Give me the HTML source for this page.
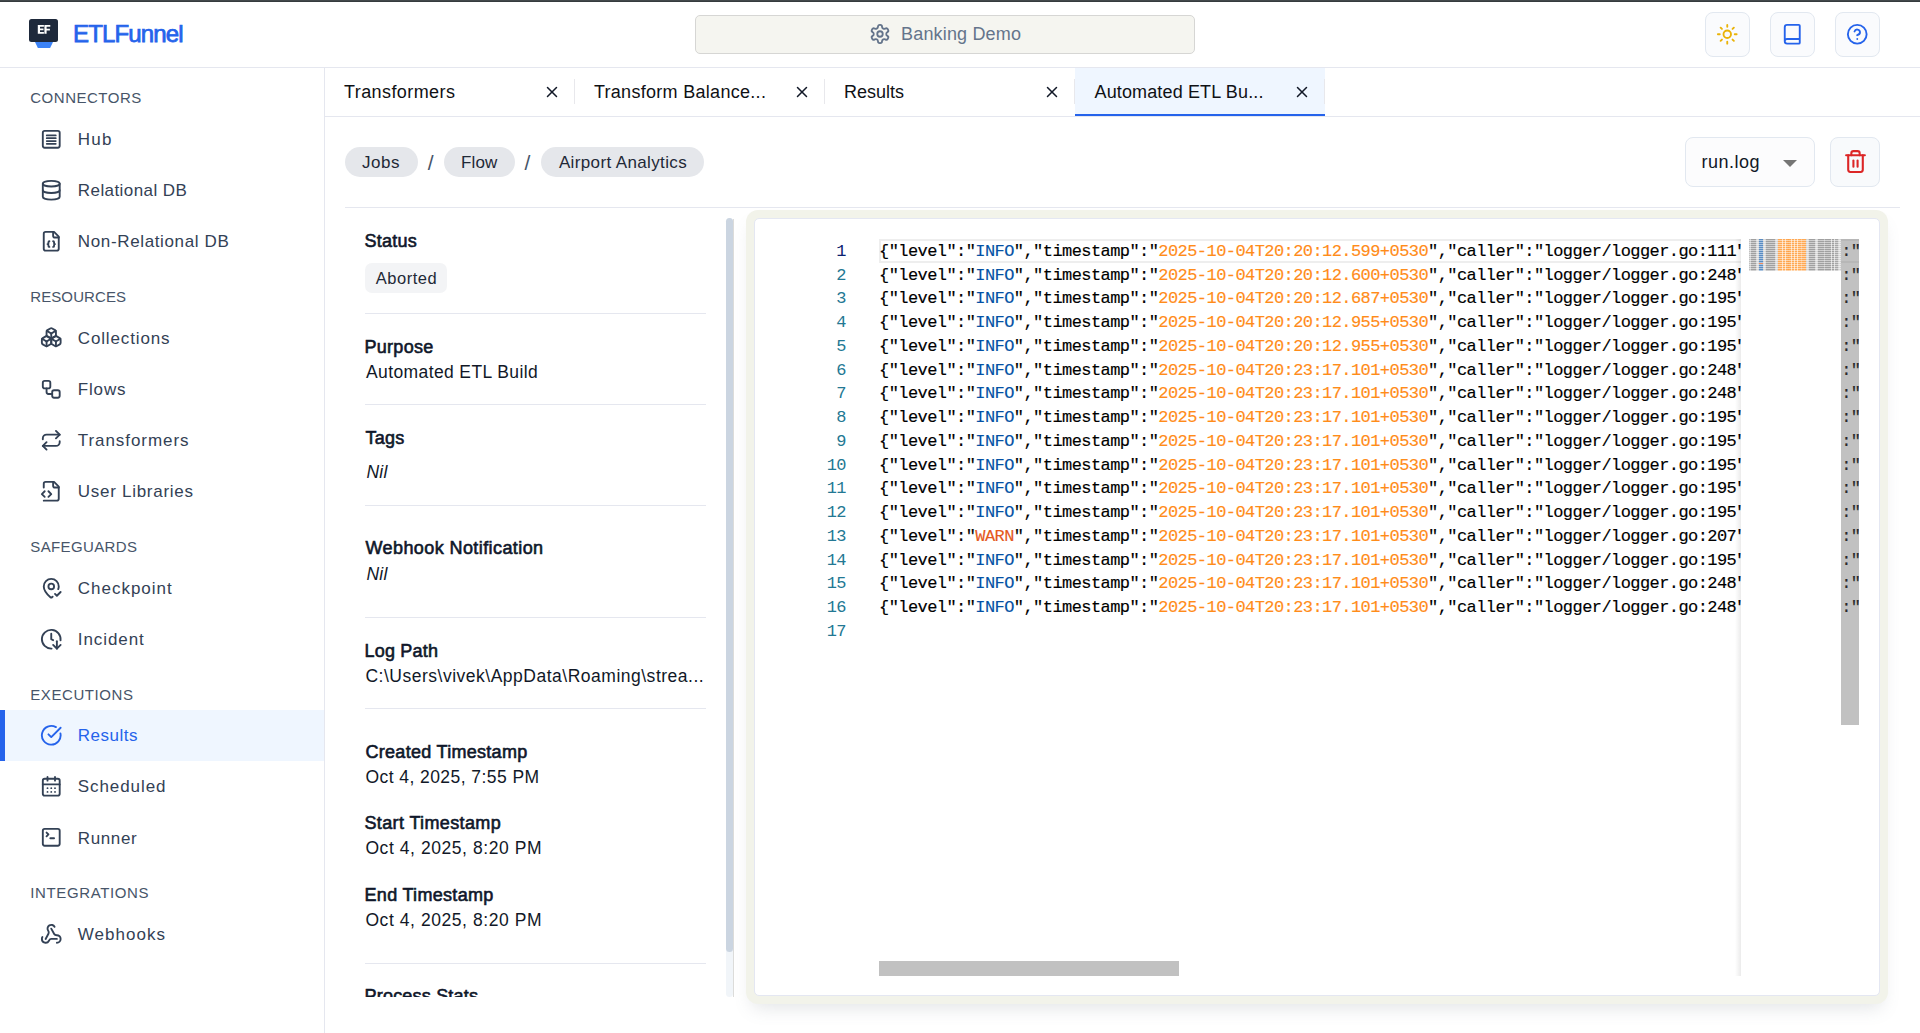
<!DOCTYPE html><html><head><meta charset="utf-8"><title>ETLFunnel</title><style>*{box-sizing:border-box;margin:0;padding:0}
html,body{width:1920px;height:1033px;overflow:hidden;background:#fff}
body{font-family:"Liberation Sans",sans-serif;color:#0f172a;position:relative}
.abs{position:absolute}
.t{white-space:pre;line-height:24px;height:24px}
.topline{left:0;top:0;width:1920px;height:2px;background:linear-gradient(#42484b 0 50%,#353b3e 50% 100%)}
.hdrline{left:0;top:67px;width:1920px;height:1px;background:#e5e7ef}
.sideline{left:324px;top:68px;width:1px;height:965px;background:#e5e7ef}
.logo-box{left:29px;top:19px;width:29px;height:23px;background:#1e293b;border-radius:2.5px}
.logo-tri{left:35px;top:42px;width:18px;height:6px;background:#3b82f6;clip-path:polygon(0 0,100% 0,84% 100%,16% 100%)}
.proj{left:695px;top:15px;width:500px;height:39px;background:#f5f5f0;border:1px solid #d6d6d4;border-radius:5px}
.hbtn{top:12px;width:45px;height:45px;background:#fafbfd;border:1px solid #e2e8f0;border-radius:8px;line-height:0}
.hbtn svg{position:absolute;left:10.25px;top:10.25px}
.actbg{left:0;width:324px;height:51px;background:#eff6ff;border-left:5px solid #2563eb}
.tabline{left:325px;top:116px;width:1595px;height:1px;background:#e5e7ef}
.tabact{left:1075px;top:68px;width:250px;height:48px;background:#eff6ff;border-bottom:2px solid #2563eb}
.tabsep{top:79px;width:1px;height:25px;background:#e8e8ec}
.pill{top:147px;height:30px;border-radius:15px;background:#e5e7eb}
.crumbline{left:345px;top:207px;width:1555px;height:1px;background:#e5e7ef}
.sel{left:1685px;top:137px;width:130px;height:50px;background:#fcfcfd;border:1px solid #e2e8f0;border-radius:8px}
.sel i{position:absolute;left:97px;top:21.5px;width:0;height:0;border-left:7px solid transparent;border-right:7px solid transparent;border-top:7px solid #757575}
.del{left:1830px;top:137px;width:50px;height:50px;background:#f8fafc;border:1px solid #e2e8f0;border-radius:8px;line-height:0}
.del svg{position:absolute;left:11.9px;top:11px}
.div{left:365px;width:341px;height:1px;background:#e5e7ef}
.badge{left:365px;top:263px;width:82px;height:30px;border-radius:7px;background:#f3f4f6}
.ltrack{left:726px;top:218px;width:7px;height:779px;background:#f1f5f9;border-radius:4px}
.lthumb{left:726px;top:218px;width:7px;height:734px;background:#cbd5e1;border-radius:4px}
.ltrackline{left:733px;top:219px;width:1px;height:778px;background:#dcdcda}
.lclip{left:345px;top:208px;width:390px;height:789px;overflow:hidden}
.edouter{left:746px;top:210px;width:1142px;height:794px;background:#f2f3ea;border-radius:12px;box-shadow:0 10px 18px -6px rgba(100,110,120,.18)}
.edinner{left:754px;top:218px;width:1126px;height:778px;background:#fff;border:1px solid #e4e7f2;border-radius:5px;overflow:hidden}
.mono{font-family:"Liberation Mono",monospace;font-size:16px;white-space:pre;-webkit-text-stroke:0.15px}
.ln{-webkit-text-stroke:0;color:#237893;text-align:right;width:60px;left:786px;height:24px;line-height:24px}
.ln.cur{color:#0b216f}
.cl{left:879px;height:24px;line-height:24px;color:#000;width:862px;overflow:hidden}
.cr{left:1841.2px;height:24px;line-height:24px;color:#000;width:18px;overflow:hidden}
.b{color:#0451a5}.o{color:#ff8c19}.r{color:#e5591c}
.curline{left:879px;top:239px;width:980px;height:24px;border:2px solid #eeeeee;border-right:none}
.hscroll{left:879px;top:961px;width:300px;height:15px;background:rgba(100,100,100,.4)}
.vscroll{left:1841px;top:239px;width:18px;height:486px;background:rgba(100,100,100,.4)}
.mmbg{left:1741px;top:239px;width:100px;height:737px;background:#fff}
.mmshadow{left:1735px;top:239px;width:6px;height:737px;background:linear-gradient(to right,rgba(0,0,0,0),rgba(0,0,0,.08))}
.mono{font-size:17px;letter-spacing:-0.570px}</style></head><body>
<div class="abs topline"></div><div class="abs hdrline"></div><div class="abs sideline"></div>
<div class="abs logo-box"></div><div class="abs logo-tri"></div>
<svg class="abs" style="left:37px;top:24px" width="14" height="11" viewBox="0 0 14 11"><path fill="#fff" d="M0.8 1h6.1v1.8H3v1.7h3.5v1.7H3v1.7h3.9v1.8H0.8zM7.4 1h5.9v1.8H9.6v1.9h3.3v1.7H9.6v3.3H7.4z"/></svg>
<div class="abs t" id="t0" style="left:73.00px;top:22.00px;font-size:24px;color:#2563eb;letter-spacing:-0.846px;-webkit-text-stroke:0.75px #2563eb;">ETLFunnel</div>
<div class="abs proj"></div>
<div class="abs" style="left:869px;top:23.1px;color:#64748b;line-height:0"><svg width="22" height="22" viewBox="0 0 24 24" fill="none" stroke="currentColor" stroke-width="2" stroke-linecap="round" stroke-linejoin="round" ><path d="M12.22 2h-.44a2 2 0 0 0-2 2v.18a2 2 0 0 1-1 1.73l-.43.25a2 2 0 0 1-2 0l-.15-.08a2 2 0 0 0-2.73.73l-.22.38a2 2 0 0 0 .73 2.73l.15.1a2 2 0 0 1 1 1.72v.51a2 2 0 0 1-1 1.74l-.15.09a2 2 0 0 0-.73 2.73l.22.38a2 2 0 0 0 2.73.73l.15-.08a2 2 0 0 1 2 0l.43.25a2 2 0 0 1 1 1.73V20a2 2 0 0 0 2 2h.44a2 2 0 0 0 2-2v-.18a2 2 0 0 1 1-1.73l.43-.25a2 2 0 0 1 2 0l.15.08a2 2 0 0 0 2.73-.73l.22-.39a2 2 0 0 0-.73-2.73l-.15-.08a2 2 0 0 1-1-1.74v-.5a2 2 0 0 1 1-1.74l.15-.09a2 2 0 0 0 .73-2.73l-.22-.38a2 2 0 0 0-2.73-.73l-.15.08a2 2 0 0 1-2 0l-.43-.25a2 2 0 0 1-1-1.73V4a2 2 0 0 0-2-2z"/><circle cx="12" cy="12" r="3"/></svg></div>
<div class="abs t" id="t1" style="left:901.10px;top:22.00px;font-size:18px;color:#64748b;letter-spacing:0.159px;">Banking Demo</div>
<div class="abs hbtn" style="left:1705px"><svg width="22.5" height="22.5" viewBox="0 0 24 24" fill="none" stroke="#eab308" stroke-width="2" stroke-linecap="round" stroke-linejoin="round" ><circle cx="12" cy="12" r="4"/><path d="M12 2v2"/><path d="M12 20v2"/><path d="m4.93 4.93 1.41 1.41"/><path d="m17.66 17.66 1.41 1.41"/><path d="M2 12h2"/><path d="M20 12h2"/><path d="m6.34 17.66-1.41 1.41"/><path d="m19.07 4.93-1.41 1.41"/></svg></div>
<div class="abs hbtn" style="left:1770px"><svg width="22.5" height="22.5" viewBox="0 0 24 24" fill="none" stroke="#2563eb" stroke-width="2" stroke-linecap="round" stroke-linejoin="round" ><path d="M4 19.5v-15A2.5 2.5 0 0 1 6.5 2H19a1 1 0 0 1 1 1v18a1 1 0 0 1-1 1H6.5a1 1 0 0 1 0-5H20"/></svg></div>
<div class="abs hbtn" style="left:1835px"><svg width="22.5" height="22.5" viewBox="0 0 24 24" fill="none" stroke="#2563eb" stroke-width="2" stroke-linecap="round" stroke-linejoin="round" ><circle cx="12" cy="12" r="10"/><path d="M9.09 9a3 3 0 0 1 5.83 1c0 2-3 3-3 3"/><path d="M12 17h.01"/></svg></div>
<div class="abs t" id="t2" style="left:30.25px;top:86.00px;font-size:15px;color:#475569;letter-spacing:0.517px;">CONNECTORS</div>
<div class="abs" style="left:40.1px;top:127.75px;color:#334155;line-height:0"><svg width="22.5" height="22.5" viewBox="0 0 24 24" fill="none" stroke="currentColor" stroke-width="2" stroke-linecap="round" stroke-linejoin="round" ><rect x="3" y="3" width="18" height="18" rx="2"/><path d="M7.2 7.9h9.6M7.2 10.9h9.6M7.2 13.9h9.6M7.2 16.9h9.6" stroke-width="1.9"/></svg></div>
<div class="abs t" id="t3" style="left:77.80px;top:128.00px;font-size:17px;color:#334155;letter-spacing:1.234px;">Hub</div>
<div class="abs" style="left:40.1px;top:178.55px;color:#334155;line-height:0"><svg width="22.5" height="22.5" viewBox="0 0 24 24" fill="none" stroke="currentColor" stroke-width="2" stroke-linecap="round" stroke-linejoin="round" ><ellipse cx="12" cy="5" rx="9" ry="3"/><path d="M3 5V19A9 3 0 0 0 21 19V5"/><path d="M3 12A9 3 0 0 0 21 12"/></svg></div>
<div class="abs t" id="t4" style="left:77.80px;top:179.00px;font-size:17px;color:#334155;letter-spacing:0.425px;">Relational DB</div>
<div class="abs" style="left:40.1px;top:229.55px;color:#334155;line-height:0"><svg width="22.5" height="22.5" viewBox="0 0 24 24" fill="none" stroke="currentColor" stroke-width="2" stroke-linecap="round" stroke-linejoin="round" ><path d="M15 2H6a2 2 0 0 0-2 2v16a2 2 0 0 0 2 2h12a2 2 0 0 0 2-2V7Z"/><path d="M14 2v4a2 2 0 0 0 2 2h4"/><path d="M10 12a1 1 0 0 0-1 1v1a1 1 0 0 1-1 1 1 1 0 0 1 1 1v1a1 1 0 0 0 1 1"/><path d="M14 18a1 1 0 0 0 1-1v-1a1 1 0 0 1 1-1 1 1 0 0 1-1-1v-1a1 1 0 0 0-1-1"/></svg></div>
<div class="abs t" id="t5" style="left:77.80px;top:230.00px;font-size:17px;color:#334155;letter-spacing:0.641px;">Non-Relational DB</div>
<div class="abs t" id="t6" style="left:30.25px;top:285.00px;font-size:15px;color:#475569;letter-spacing:0.092px;">RESOURCES</div>
<div class="abs" style="left:40.1px;top:325.85px;color:#334155;line-height:0"><svg width="22.5" height="22.5" viewBox="0 0 24 24" fill="none" stroke="currentColor" stroke-width="2" stroke-linecap="round" stroke-linejoin="round" ><path d="M2.97 12.92A2 2 0 0 0 2 14.63v3.24a2 2 0 0 0 .97 1.71l3 1.8a2 2 0 0 0 2.06 0L12 19v-5.5l-5-3-4.03 2.42Z"/><path d="m7 16.5-4.74-2.85"/><path d="m7 16.5 5-3"/><path d="M7 16.5v5.17"/><path d="M12 13.5V19l3.97 2.38a2 2 0 0 0 2.06 0l3-1.8a2 2 0 0 0 .97-1.71v-3.24a2 2 0 0 0-.97-1.71L17 10.5l-5 3Z"/><path d="m17 16.5-5-3"/><path d="m17 16.5 4.74-2.85"/><path d="M17 16.5v5.17"/><path d="M7.97 4.42A2 2 0 0 0 7 6.13v4.37l5 3 5-3V6.13a2 2 0 0 0-.97-1.71l-3-1.8a2 2 0 0 0-2.06 0l-3 1.8Z"/><path d="M12 8 7.26 5.15"/><path d="m12 8 4.74-2.85"/><path d="M12 13.5V8"/></svg></div>
<div class="abs t" id="t7" style="left:77.80px;top:327.00px;font-size:17px;color:#334155;letter-spacing:0.855px;">Collections</div>
<div class="abs" style="left:40.1px;top:377.65px;color:#334155;line-height:0"><svg width="22.5" height="22.5" viewBox="0 0 24 24" fill="none" stroke="currentColor" stroke-width="2" stroke-linecap="round" stroke-linejoin="round" ><rect width="8" height="8" x="3" y="3" rx="2"/><path d="M7 11v4a2 2 0 0 0 2 2h4"/><rect width="8" height="8" x="13" y="13" rx="2"/></svg></div>
<div class="abs t" id="t8" style="left:77.80px;top:378.00px;font-size:17px;color:#334155;letter-spacing:0.827px;">Flows</div>
<div class="abs" style="left:40.1px;top:428.75px;color:#334155;line-height:0"><svg width="22.5" height="22.5" viewBox="0 0 24 24" fill="none" stroke="currentColor" stroke-width="2" stroke-linecap="round" stroke-linejoin="round" ><path d="m17 2 4 4-4 4"/><path d="M3 11v-1a4 4 0 0 1 4-4h14"/><path d="m7 22-4-4 4-4"/><path d="M21 13v1a4 4 0 0 1-4 4H3"/></svg></div>
<div class="abs t" id="t9" style="left:77.80px;top:429.00px;font-size:17px;color:#334155;letter-spacing:0.933px;">Transformers</div>
<div class="abs" style="left:40.1px;top:479.75px;color:#334155;line-height:0"><svg width="22.5" height="22.5" viewBox="0 0 24 24" fill="none" stroke="currentColor" stroke-width="2" stroke-linecap="round" stroke-linejoin="round" ><path d="M4 22h14a2 2 0 0 0 2-2V7l-5-5H6a2 2 0 0 0-2 2v4"/><path d="M14 2v4a2 2 0 0 0 2 2h4"/><path d="m5 12-3 3 3 3"/><path d="m9 18 3-3-3-3"/></svg></div>
<div class="abs t" id="t10" style="left:77.80px;top:480.00px;font-size:17px;color:#334155;letter-spacing:0.722px;">User Libraries</div>
<div class="abs t" id="t11" style="left:30.25px;top:535.00px;font-size:15px;color:#475569;letter-spacing:0.378px;">SAFEGUARDS</div>
<div class="abs" style="left:40.1px;top:576.55px;color:#334155;line-height:0"><svg width="22.5" height="22.5" viewBox="0 0 24 24" fill="none" stroke="currentColor" stroke-width="2" stroke-linecap="round" stroke-linejoin="round" ><path d="M19.43 12.935c.357-.967.57-1.955.57-2.935a8 8 0 0 0-16 0c0 4.993 5.539 10.193 7.399 11.799a1 1 0 0 0 1.202 0 32.197 32.197 0 0 0 .813-.728"/><circle cx="12" cy="10" r="3"/><path d="m16 18 2 2 4-4"/></svg></div>
<div class="abs t" id="t12" style="left:77.80px;top:577.00px;font-size:17px;color:#334155;letter-spacing:0.986px;">Checkpoint</div>
<div class="abs" style="left:40.1px;top:627.75px;color:#334155;line-height:0"><svg width="22.5" height="22.5" viewBox="0 0 24 24" fill="none" stroke="currentColor" stroke-width="2" stroke-linecap="round" stroke-linejoin="round" ><path d="M12.338 21.994A10 10 0 1 1 21.925 13.227"/><path d="M12 6v6l2 1"/><path d="m14 18 4 4 4-4"/><path d="M18 14v8"/></svg></div>
<div class="abs t" id="t13" style="left:77.80px;top:628.00px;font-size:17px;color:#334155;letter-spacing:0.912px;">Incident</div>
<div class="abs t" id="t14" style="left:30.25px;top:683.00px;font-size:15px;color:#475569;letter-spacing:0.582px;">EXECUTIONS</div>
<div class="abs actbg" style="top:710px"></div>
<div class="abs" style="left:40.1px;top:723.95px;color:#2563eb;line-height:0"><svg width="22.5" height="22.5" viewBox="0 0 24 24" fill="none" stroke="currentColor" stroke-width="2" stroke-linecap="round" stroke-linejoin="round" ><path d="M21.801 10A10 10 0 1 1 17 3.335"/><path d="m9 11 3 3L22 4"/></svg></div>
<div class="abs t" id="t15" style="left:77.80px;top:724.00px;font-size:17px;color:#2563eb;letter-spacing:0.502px;">Results</div>
<div class="abs" style="left:40.1px;top:775.15px;color:#334155;line-height:0"><svg width="22.5" height="22.5" viewBox="0 0 24 24" fill="none" stroke="currentColor" stroke-width="2" stroke-linecap="round" stroke-linejoin="round" ><path d="M8 2v4"/><path d="M16 2v4"/><rect width="18" height="18" x="3" y="4" rx="2"/><path d="M3 10h18"/><path d="M8 14h.01"/><path d="M12 14h.01"/><path d="M16 14h.01"/><path d="M8 18h.01"/><path d="M12 18h.01"/><path d="M16 18h.01"/></svg></div>
<div class="abs t" id="t16" style="left:77.80px;top:775.00px;font-size:17px;color:#334155;letter-spacing:0.914px;">Scheduled</div>
<div class="abs" style="left:40.1px;top:826.15px;color:#334155;line-height:0"><svg width="22.5" height="22.5" viewBox="0 0 24 24" fill="none" stroke="currentColor" stroke-width="2" stroke-linecap="round" stroke-linejoin="round" ><path d="m7 11 2-2-2-2"/><path d="M11 13h4"/><rect width="18" height="18" x="3" y="3" rx="2" ry="2"/></svg></div>
<div class="abs t" id="t17" style="left:77.80px;top:827.00px;font-size:17px;color:#334155;letter-spacing:0.621px;">Runner</div>
<div class="abs t" id="t18" style="left:30.25px;top:881.00px;font-size:15px;color:#475569;letter-spacing:0.624px;">INTEGRATIONS</div>
<div class="abs" style="left:40.1px;top:922.75px;color:#334155;line-height:0"><svg width="22.5" height="22.5" viewBox="0 0 24 24" fill="none" stroke="currentColor" stroke-width="2" stroke-linecap="round" stroke-linejoin="round" ><path d="M18 16.98h-5.99c-1.1 0-1.95.94-2.48 1.9A4 4 0 0 1 2 17c.01-.7.2-1.4.57-2"/><path d="m6 17 3.13-5.78c.53-.97.1-2.18-.5-3.1a4 4 0 1 1 6.89-4.06"/><path d="m12 6 3.13 5.73C15.66 12.7 16.9 13 18 13a4 4 0 0 1 0 8"/></svg></div>
<div class="abs t" id="t19" style="left:77.80px;top:923.00px;font-size:17px;color:#334155;letter-spacing:1.027px;">Webhooks</div>
<div class="abs tabline"></div>
<div class="abs tabact"></div>
<div class="abs t" id="t20" style="left:344.00px;top:80.00px;font-size:18px;color:#0f1115;letter-spacing:0.414px;">Transformers</div>
<div class="abs" style="left:542.7px;top:83px;color:#111827;line-height:0"><svg width="18" height="18" viewBox="0 0 24 24" fill="none" stroke="currentColor" stroke-width="2" stroke-linecap="round" stroke-linejoin="round" ><path d="M18 6 6 18"/><path d="m6 6 12 12"/></svg></div>
<div class="abs t" id="t21" style="left:593.90px;top:80.00px;font-size:18px;color:#0f1115;letter-spacing:0.295px;">Transform Balance...</div>
<div class="abs" style="left:792.7px;top:83px;color:#111827;line-height:0"><svg width="18" height="18" viewBox="0 0 24 24" fill="none" stroke="currentColor" stroke-width="2" stroke-linecap="round" stroke-linejoin="round" ><path d="M18 6 6 18"/><path d="m6 6 12 12"/></svg></div>
<div class="abs t" id="t22" style="left:843.90px;top:80.00px;font-size:18px;color:#0f1115;letter-spacing:-0.003px;">Results</div>
<div class="abs" style="left:1042.7px;top:83px;color:#111827;line-height:0"><svg width="18" height="18" viewBox="0 0 24 24" fill="none" stroke="currentColor" stroke-width="2" stroke-linecap="round" stroke-linejoin="round" ><path d="M18 6 6 18"/><path d="m6 6 12 12"/></svg></div>
<div class="abs t" id="t23" style="left:1094.50px;top:80.00px;font-size:18px;color:#0f1115;letter-spacing:0.140px;">Automated ETL Bu...</div>
<div class="abs" style="left:1292.8px;top:83px;color:#111827;line-height:0"><svg width="18" height="18" viewBox="0 0 24 24" fill="none" stroke="currentColor" stroke-width="2" stroke-linecap="round" stroke-linejoin="round" ><path d="M18 6 6 18"/><path d="m6 6 12 12"/></svg></div>
<div class="abs tabsep" style="left:574px"></div>
<div class="abs tabsep" style="left:824px"></div>
<div class="abs tabsep" style="left:1074px"></div>
<div class="abs tabsep" style="left:1324px"></div>
<div class="abs pill" style="left:345px;width:73px"></div>
<div class="abs pill" style="left:444px;width:71px"></div>
<div class="abs pill" style="left:541px;width:163px"></div>
<div class="abs t" id="t24" style="left:362.10px;top:151.00px;font-size:17px;color:#1f2937;letter-spacing:0.530px;">Jobs</div>
<div class="abs t" id="t25" style="left:427.80px;top:151.00px;font-size:21px;color:#475569;letter-spacing:0.000px;">/</div>
<div class="abs t" id="t26" style="left:461.10px;top:151.00px;font-size:17px;color:#1f2937;letter-spacing:0.095px;">Flow</div>
<div class="abs t" id="t27" style="left:524.60px;top:151.00px;font-size:21px;color:#475569;letter-spacing:0.000px;">/</div>
<div class="abs t" id="t28" style="left:558.90px;top:151.00px;font-size:17px;color:#1f2937;letter-spacing:0.368px;">Airport Analytics</div>
<div class="abs crumbline"></div>
<div class="abs sel"><i></i></div>
<div class="abs t" id="t29" style="left:1701.40px;top:150.00px;font-size:18px;color:#111827;letter-spacing:0.512px;">run.log</div>
<div class="abs del"><svg width="25" height="25" viewBox="0 0 24 24" fill="none" stroke="#dc2626" stroke-width="2" stroke-linecap="round" stroke-linejoin="round" ><path d="M3 6h18"/><path d="M19 6v14c0 1-1 2-2 2H7c-1 0-2-1-2-2V6"/><path d="M8 6V4c0-1 1-2 2-2h4c1 0 2 1 2 2v2"/><line x1="10" x2="10" y1="11" y2="17"/><line x1="14" x2="14" y1="11" y2="17"/></svg></div>
<div class="abs lclip"><div class="abs" style="left:-345px;top:-208px;width:1920px;height:1033px">
<div class="abs t" id="t30" style="left:364.50px;top:229.00px;font-size:18px;color:#0f172a;letter-spacing:0.234px;-webkit-text-stroke:0.6px #0f172a;">Status</div>
<div class="abs badge"></div>
<div class="abs t" id="t31" style="left:375.70px;top:266.00px;font-size:16.5px;color:#1f2937;letter-spacing:0.531px;">Aborted</div>
<div class="abs div" style="top:313px"></div>
<div class="abs t" id="t32" style="left:364.50px;top:335.00px;font-size:18px;color:#0f172a;letter-spacing:0.278px;-webkit-text-stroke:0.6px #0f172a;">Purpose</div>
<div class="abs t" id="t33" style="left:366.00px;top:360.00px;font-size:17.5px;color:#111827;letter-spacing:0.387px;">Automated ETL Build</div>
<div class="abs div" style="top:404px"></div>
<div class="abs t" id="t34" style="left:365.50px;top:426.00px;font-size:18px;color:#0f172a;letter-spacing:0.260px;-webkit-text-stroke:0.6px #0f172a;">Tags</div>
<div class="abs t" id="t35" style="left:366.40px;top:460.00px;font-size:17.5px;color:#111827;letter-spacing:0.337px;font-style:italic;">Nil</div>
<div class="abs div" style="top:505px"></div>
<div class="abs t" id="t36" style="left:365.50px;top:536.00px;font-size:18px;color:#0f172a;letter-spacing:0.413px;-webkit-text-stroke:0.6px #0f172a;">Webhook Notification</div>
<div class="abs t" id="t37" style="left:366.40px;top:562.00px;font-size:17.5px;color:#111827;letter-spacing:0.337px;font-style:italic;">Nil</div>
<div class="abs div" style="top:617px"></div>
<div class="abs t" id="t38" style="left:364.50px;top:639.00px;font-size:18px;color:#0f172a;letter-spacing:0.193px;-webkit-text-stroke:0.6px #0f172a;">Log Path</div>
<div class="abs t" id="t39" style="left:365.40px;top:664.00px;font-size:17.5px;color:#111827;letter-spacing:0.507px;">C:\Users\vivek\AppData\Roaming\strea...</div>
<div class="abs div" style="top:708px"></div>
<div class="abs t" id="t40" style="left:365.50px;top:740.00px;font-size:18px;color:#0f172a;letter-spacing:0.289px;-webkit-text-stroke:0.6px #0f172a;">Created Timestamp</div>
<div class="abs t" id="t41" style="left:365.40px;top:765.00px;font-size:17.5px;color:#111827;letter-spacing:0.437px;">Oct 4, 2025, 7:55 PM</div>
<div class="abs t" id="t42" style="left:364.50px;top:811.00px;font-size:18px;color:#0f172a;letter-spacing:0.368px;-webkit-text-stroke:0.6px #0f172a;">Start Timestamp</div>
<div class="abs t" id="t43" style="left:365.40px;top:836.00px;font-size:17.5px;color:#111827;letter-spacing:0.569px;">Oct 4, 2025, 8:20 PM</div>
<div class="abs t" id="t44" style="left:364.50px;top:883.00px;font-size:18px;color:#0f172a;letter-spacing:0.311px;-webkit-text-stroke:0.6px #0f172a;">End Timestamp</div>
<div class="abs t" id="t45" style="left:365.40px;top:908.00px;font-size:17.5px;color:#111827;letter-spacing:0.569px;">Oct 4, 2025, 8:20 PM</div>
<div class="abs div" style="top:963px"></div>
<div class="abs t" id="t46" style="left:364.50px;top:984.00px;font-size:18px;color:#0f172a;letter-spacing:0.205px;-webkit-text-stroke:0.6px #0f172a;">Process Stats</div>
</div></div>
<div class="abs ltrack"></div><div class="abs lthumb"></div><div class="abs ltrackline"></div>
<div class="abs edouter"></div><div class="abs edinner"></div>
<div class="abs curline"></div>
<div class="abs mono ln cur" style="top:240.00px">1</div>
<div class="abs mono cl" style="top:240.00px">{"level":"<span class="b">INFO</span>","timestamp":"<span class="o">2025-10-04T20:20:12.599+0530</span>","caller":"logger/logger.go:111","message":"</div>
<div class="abs mono cr" style="top:240.00px">:"</div>
<div class="abs mono ln" style="top:264.00px">2</div>
<div class="abs mono cl" style="top:264.00px">{"level":"<span class="b">INFO</span>","timestamp":"<span class="o">2025-10-04T20:20:12.600+0530</span>","caller":"logger/logger.go:248","message":"</div>
<div class="abs mono cr" style="top:264.00px">:"</div>
<div class="abs mono ln" style="top:287.00px">3</div>
<div class="abs mono cl" style="top:287.00px">{"level":"<span class="b">INFO</span>","timestamp":"<span class="o">2025-10-04T20:20:12.687+0530</span>","caller":"logger/logger.go:195","message":"</div>
<div class="abs mono cr" style="top:287.00px">:"</div>
<div class="abs mono ln" style="top:311.00px">4</div>
<div class="abs mono cl" style="top:311.00px">{"level":"<span class="b">INFO</span>","timestamp":"<span class="o">2025-10-04T20:20:12.955+0530</span>","caller":"logger/logger.go:195","message":"</div>
<div class="abs mono cr" style="top:311.00px">:"</div>
<div class="abs mono ln" style="top:335.00px">5</div>
<div class="abs mono cl" style="top:335.00px">{"level":"<span class="b">INFO</span>","timestamp":"<span class="o">2025-10-04T20:20:12.955+0530</span>","caller":"logger/logger.go:195","message":"</div>
<div class="abs mono cr" style="top:335.00px">:"</div>
<div class="abs mono ln" style="top:359.00px">6</div>
<div class="abs mono cl" style="top:359.00px">{"level":"<span class="b">INFO</span>","timestamp":"<span class="o">2025-10-04T20:23:17.101+0530</span>","caller":"logger/logger.go:248","message":"</div>
<div class="abs mono cr" style="top:359.00px">:"</div>
<div class="abs mono ln" style="top:382.00px">7</div>
<div class="abs mono cl" style="top:382.00px">{"level":"<span class="b">INFO</span>","timestamp":"<span class="o">2025-10-04T20:23:17.101+0530</span>","caller":"logger/logger.go:248","message":"</div>
<div class="abs mono cr" style="top:382.00px">:"</div>
<div class="abs mono ln" style="top:406.00px">8</div>
<div class="abs mono cl" style="top:406.00px">{"level":"<span class="b">INFO</span>","timestamp":"<span class="o">2025-10-04T20:23:17.101+0530</span>","caller":"logger/logger.go:195","message":"</div>
<div class="abs mono cr" style="top:406.00px">:"</div>
<div class="abs mono ln" style="top:430.00px">9</div>
<div class="abs mono cl" style="top:430.00px">{"level":"<span class="b">INFO</span>","timestamp":"<span class="o">2025-10-04T20:23:17.101+0530</span>","caller":"logger/logger.go:195","message":"</div>
<div class="abs mono cr" style="top:430.00px">:"</div>
<div class="abs mono ln" style="top:454.00px">10</div>
<div class="abs mono cl" style="top:454.00px">{"level":"<span class="b">INFO</span>","timestamp":"<span class="o">2025-10-04T20:23:17.101+0530</span>","caller":"logger/logger.go:195","message":"</div>
<div class="abs mono cr" style="top:454.00px">:"</div>
<div class="abs mono ln" style="top:477.00px">11</div>
<div class="abs mono cl" style="top:477.00px">{"level":"<span class="b">INFO</span>","timestamp":"<span class="o">2025-10-04T20:23:17.101+0530</span>","caller":"logger/logger.go:195","message":"</div>
<div class="abs mono cr" style="top:477.00px">:"</div>
<div class="abs mono ln" style="top:501.00px">12</div>
<div class="abs mono cl" style="top:501.00px">{"level":"<span class="b">INFO</span>","timestamp":"<span class="o">2025-10-04T20:23:17.101+0530</span>","caller":"logger/logger.go:195","message":"</div>
<div class="abs mono cr" style="top:501.00px">:"</div>
<div class="abs mono ln" style="top:525.00px">13</div>
<div class="abs mono cl" style="top:525.00px">{"level":"<span class="r">WARN</span>","timestamp":"<span class="o">2025-10-04T20:23:17.101+0530</span>","caller":"logger/logger.go:207","message":"</div>
<div class="abs mono cr" style="top:525.00px">:"</div>
<div class="abs mono ln" style="top:549.00px">14</div>
<div class="abs mono cl" style="top:549.00px">{"level":"<span class="b">INFO</span>","timestamp":"<span class="o">2025-10-04T20:23:17.101+0530</span>","caller":"logger/logger.go:195","message":"</div>
<div class="abs mono cr" style="top:549.00px">:"</div>
<div class="abs mono ln" style="top:572.00px">15</div>
<div class="abs mono cl" style="top:572.00px">{"level":"<span class="b">INFO</span>","timestamp":"<span class="o">2025-10-04T20:23:17.101+0530</span>","caller":"logger/logger.go:248","message":"</div>
<div class="abs mono cr" style="top:572.00px">:"</div>
<div class="abs mono ln" style="top:596.00px">16</div>
<div class="abs mono cl" style="top:596.00px">{"level":"<span class="b">INFO</span>","timestamp":"<span class="o">2025-10-04T20:23:17.101+0530</span>","caller":"logger/logger.go:248","message":"</div>
<div class="abs mono cr" style="top:596.00px">:"</div>
<div class="abs mono ln" style="top:620.00px">17</div>
<div class="abs mmbg"></div><div class="abs mmshadow"></div>
<div class="abs" style="left:1749px;top:239px;width:92px;height:32px;background:repeating-linear-gradient(to bottom,rgba(255,255,255,0) 0 1px,rgba(255,255,255,.5) 1px 2px),linear-gradient(to right,#bfbfbf 0px 1px,#cfcfcf 1px 2px,#a0a0a0 2px 3px,#a0a0a0 3px 4px,#a0a0a0 4px 5px,#a0a0a0 5px 6px,#a0a0a0 6px 7px,#cfcfcf 7px 8px,#dcdcdc 8px 9px,#cfcfcf 9px 10px,#598cc3 10px 11px,#598cc3 11px 12px,#598cc3 12px 13px,#598cc3 13px 14px,#cfcfcf 14px 15px,#dcdcdc 15px 16px,#cfcfcf 16px 17px,#a0a0a0 17px 18px,#a0a0a0 18px 19px,#a0a0a0 19px 20px,#a0a0a0 20px 21px,#a0a0a0 21px 22px,#a0a0a0 22px 23px,#a0a0a0 23px 24px,#a0a0a0 24px 25px,#a0a0a0 25px 26px,#cfcfcf 26px 27px,#dcdcdc 27px 28px,#cfcfcf 28px 29px,#ffa954 29px 30px,#ffa954 30px 31px,#ffa954 31px 32px,#ffa954 32px 33px,#ffdcba 33px 34px,#ffa954 34px 35px,#ffa954 35px 36px,#ffdcba 36px 37px,#ffa954 37px 38px,#ffa954 38px 39px,#ffa144 39px 40px,#ffa954 40px 41px,#ffa954 41px 42px,#ffdcba 42px 43px,#ffa954 43px 44px,#ffa954 44px 45px,#ffdcba 45px 46px,#ffa954 46px 47px,#ffa954 47px 48px,#ffdcba 48px 49px,#ffa954 49px 50px,#ffa954 50px 51px,#ffa954 51px 52px,#ffc082 52px 53px,#ffa954 53px 54px,#ffa954 54px 55px,#ffa954 55px 56px,#ffa954 56px 57px,#cfcfcf 57px 58px,#dcdcdc 58px 59px,#cfcfcf 59px 60px,#a0a0a0 60px 61px,#a0a0a0 61px 62px,#a0a0a0 62px 63px,#a0a0a0 63px 64px,#a0a0a0 64px 65px,#a0a0a0 65px 66px,#cfcfcf 66px 67px,#dcdcdc 67px 68px,#cfcfcf 68px 69px,#a0a0a0 69px 70px,#a0a0a0 70px 71px,#a0a0a0 71px 72px,#a0a0a0 72px 73px,#a0a0a0 73px 74px,#a0a0a0 74px 75px,#bfbfbf 75px 76px,#a0a0a0 76px 77px,#a0a0a0 77px 78px,#a0a0a0 78px 79px,#a0a0a0 79px 80px,#a0a0a0 80px 81px,#a0a0a0 81px 82px,#dcdcdc 82px 83px,#a0a0a0 83px 84px,#a0a0a0 84px 85px,#dcdcdc 85px 86px,#a8a8a8 86px 87px,#a8a8a8 87px 88px,#a8a8a8 88px 89px,#cfcfcf 89px 90px,#dcdcdc 90px 91px,#cfcfcf 91px 92px)"></div>
<div class="abs" style="left:1759px;top:263px;width:4px;height:1px;background:#f08a5a"></div>
<div class="abs vscroll"></div><div class="abs hscroll"></div>
</body></html>
